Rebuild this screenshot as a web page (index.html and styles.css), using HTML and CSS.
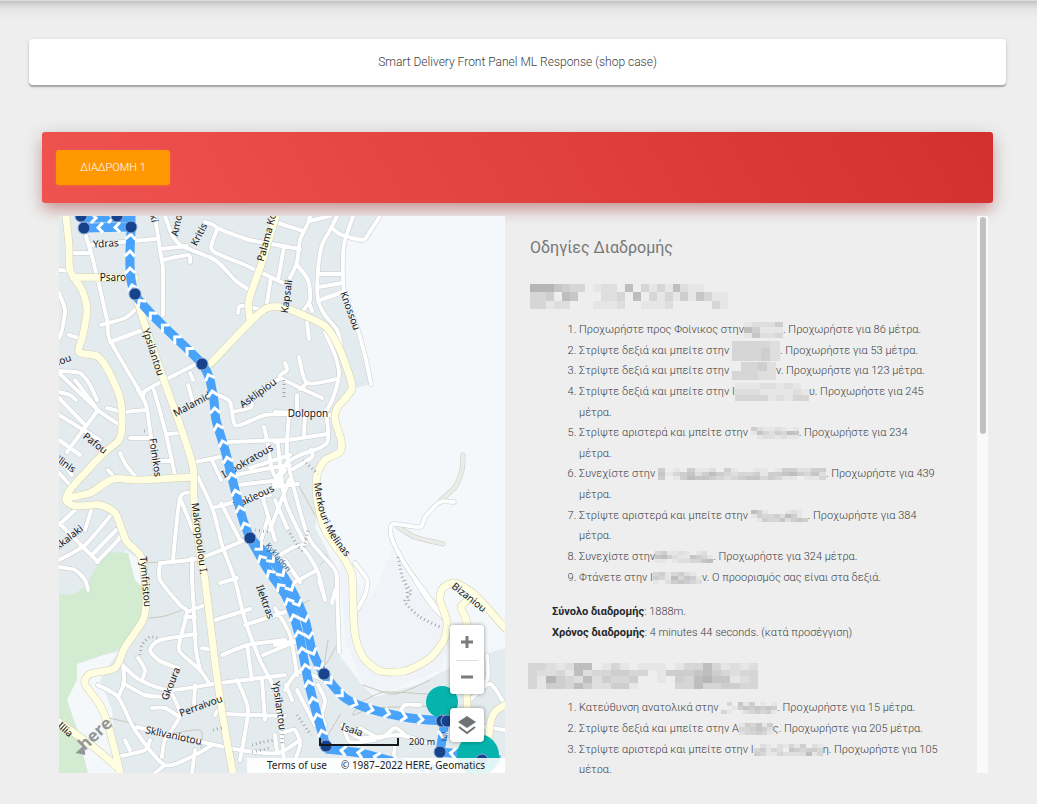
FILE: index.html
```html
<!DOCTYPE html>
<html lang="el">
<head>
<meta charset="utf-8">
<title>Smart Delivery Front Panel</title>
<link rel="stylesheet" href="styles.css">
</head>
<body>
<div class="page">
  <header class="title-card">Smart Delivery Front Panel ML Response (shop case)</header>
  <main>
    <nav class="tabs"><button class="tab" type="button">ΔΙΑΔΡΟΜΗ 1</button></nav>
    <div class="content">
      <section class="map" aria-label="Map">
        <svg class="map-canvas" viewBox="59 216 446 557" preserveAspectRatio="xMidYMid slice">
          <rect class="land" x="0" y="0" width="1000" height="1000"/>
          <path class="sea" d="M380 216L370 237L345 237L343 290L371 384L356 388L345 402L334 412L341 445L318 468L318 515L315 527L337 570L339 655L362 685L375 697L420 684L460 662L505 648V216Z"/>
          <path class="built" d="M339 560L345 640L365 688L380 694L440 670L452 640L436 598L415 590L395 545L370 600Z"/>
          <path class="sea" d="M60 664L118 652L100 680L112 710L117 773H88L60 720ZM125 550L142 560L145 590L135 590Z"/>
          <path class="park" d="M59 594L73 595L86 586L97 566L105 552L128 553L135 580L145 590L142 620L121 649L77 664V680L67 700L76 726L88 773H59Z"/>
          <g id="roads"></g>
          <g class="labels">
            <text transform="translate(106 247) rotate(-3)">Ydras</text>
            <text transform="translate(116 281)">Psaron</text>
            <text transform="translate(150 353) rotate(72)">Ypsilantou</text>
            <text transform="translate(202 236) rotate(-62)">Kritis</text>
            <text transform="translate(180 226) rotate(-78)">Amo</text>
            <text transform="translate(151 219) rotate(80)">ki</text>
            <text transform="translate(270 238) rotate(-75)">Palama Ko</text>
            <text transform="translate(290 297) rotate(-82)">Kapsali</text>
            <text transform="translate(347 312) rotate(70)">Knossou</text>
            <text transform="translate(260 396) rotate(-36)">Asklipiou</text>
            <text transform="translate(196 406) rotate(-28)">Malamida</text>
            <text transform="translate(308 417)">Dolopon</text>
            <text transform="translate(249 464) rotate(-30)">Ippokratous</text>
            <text transform="translate(255 500) rotate(-25)">Irakleous</text>
            <text transform="translate(152 458) rotate(82)">Foinikos</text>
            <text transform="translate(93 446) rotate(38)">Pafou</text>
            <text transform="translate(64 467) rotate(35)">ilinis</text>
            <text transform="translate(65 363) rotate(-20)">iou</text>
            <text transform="translate(196 539) rotate(83)">Makropoulou I.</text>
            <text transform="translate(71 540) rotate(-38)">kkalaki</text>
            <text transform="translate(142 582) rotate(85)">Tymfristou</text>
            <path id="melinas" fill="none" d="M314 483C318 515 324 535 354 566"/>
            <text class="along"><textPath href="#melinas">Merkouri Melinas</textPath></text>
            <text transform="translate(467 600) rotate(38)">Bizaniou</text>
            <text transform="translate(262 603) rotate(70)">Ilektras</text>
            <text transform="translate(276 706) rotate(82)">Ypsilantou</text>
            <text transform="translate(174 685) rotate(-68)">Gkoura</text>
            <text transform="translate(202 709) rotate(-20)">Perraivou</text>
            <text transform="translate(173 739) rotate(12)">Sklivaniotou</text>
            <text transform="translate(63 732) rotate(42)">Illia</text>
            <text transform="translate(351 733) rotate(18)">Isaia</text>
          </g>
          <g id="route"></g>
          <g class="labels">
            <text class="faint" transform="translate(276 559) rotate(50)">Kykladon</text>
            <text class="faint" transform="translate(447 737) rotate(-80)">tal</text>
          </g>
          <g class="stops">
            <circle class="depot" cx="442" cy="702" r="16"/><circle class="depot" cx="478" cy="755" r="21"/>
            <circle cx="81" cy="216" r="6"/><circle cx="117" cy="216" r="6"/><circle cx="84" cy="228" r="6"/><circle cx="131" cy="227" r="6"/><circle cx="135" cy="294" r="6"/><circle cx="202" cy="364" r="6"/><circle cx="250" cy="538" r="6"/><circle cx="324" cy="674" r="6"/><circle cx="326" cy="746" r="6"/><circle cx="442" cy="721" r="6"/><circle cx="447" cy="721" r="6"/><circle cx="440" cy="752" r="6"/><circle cx="482" cy="760" r="6"/>
          </g>
          <g transform="translate(84 752) rotate(-43)"><path class="brand-mark" d="M-7 -5H5L-1 3Z"/><text class="brand" x="1" y="0">here</text></g>
        </svg>
        <div class="copyright"><a href="#terms">Terms of use</a><span>© 1987–2022 HERE, Geomatics</span></div>
        <div class="scale"><span class="scale-bar"></span><span>200 m</span></div>
        <div class="controls">
          <div class="zoom">
            <button type="button" aria-label="Zoom in"><svg viewBox="0 0 34 34"><path d="M17 11V23M11 17H23"/></svg></button>
            <button type="button" aria-label="Zoom out"><svg viewBox="0 0 34 34"><path d="M11 17H23"/></svg></button>
          </div>
          <button class="layers" type="button" aria-label="Layers"><svg viewBox="0 0 34 34"><path class="solid" d="M17 8L26 14L17 20L8 14Z"/><path class="sheet" d="M9 19L17 25L25 19"/></svg></button>
        </div>
      </section>
      <section class="directions">
        <div class="steps">
          <h1>Οδηγίες Διαδρομής</h1>
          <h2><span class="redacted" data-size="198x25" data-rows="1113455.7668285757267788.|5548238886658285757473577.|557668.87776887776.8888578"></span></h2>
          <ol>
            <li>Προχωρήστε προς Φοίνικος στην<span class="redacted" data-size="39x16" data-rows="76664|24777|73665"></span>. Προχωρήστε για 86 μέτρα.</li>
            <li>Στρίψτε δεξιά και μπείτε στην <span class="redacted" data-size="48x20" data-rows="55556|55546|55546"></span>. Προχωρήστε για 53 μέτρα.</li>
            <li>Στρίψτε δεξιά και μπείτε στην <span class="redacted" data-size="44x18" data-rows=".5546|55566"></span>ν. Προχωρήστε για 123 μέτρα.</li>
            <li>Στρίψτε δεξιά και μπείτε στην Ι<span class="redacted" data-size="74x18" data-rows="777667678|666777767|555576755"></span>υ. Προχωρήστε για 245 μέτρα.</li>
            <li>Στρίψτε αριστερά και μπείτε στην <span class="redacted" data-size="48x12" data-rows="46776787|73564523|87667677"></span>. Προχωρήστε για 234 μέτρα.</li>
            <li>Συνεχίστε στην <span class="redacted" data-size="168x12" data-rows="48784776847887787446644|37543642456554744324536|48742334565433545778775"></span>. Προχωρήστε για 439 μέτρα.</li>
            <li>Στρίψτε αριστερά και μπείτε στην <span class="redacted" data-size="57x12" data-rows="2478887678|7455462478|8745536434"></span>. Προχωρήστε για 384 μέτρα.</li>
            <li>Συνεχίστε στην<span class="redacted" data-size="58x12" data-rows="5477678768|3246773457|7787665532"></span>. Προχωρήστε για 324 μέτρα.</li>
            <li>Φτάνετε στην Ι<span class="redacted" data-size="49x12" data-rows="54754678|45725347|78643456"></span>ν. Ο προορισμός σας είναι στα δεξιά.</li>
          </ol>
          <p><b>Σύνολο διαδρομής</b>: 1888m.<br><b>Χρόνος διαδρομής</b>: 4 minutes 44 seconds. (κατά προσέγγιση)</p>
          <h2 class="next"><span class="redacted" data-size="230x26" data-rows="5567622875787778755257676|5665726554455874443245655|5714562645548.78452133765|5744524664478888552554455"></span></h2>
          <ol>
            <li>Κατεύθυνση ανατολικά στην <span class="redacted" data-size="56x12" data-rows="8583748787|8874343434|5788654547"></span>. Προχωρήστε για 15 μέτρα.</li>
            <li>Στρίψτε δεξιά και μπείτε στην Α<span class="redacted" data-size="34x12" data-rows="745374|554346|655457"></span>ς. Προχωρήστε για 205 μέτρα.</li>
            <li>Στρίψτε αριστερά και μπείτε στην Ι<span class="redacted" data-size="69x12" data-rows="867867574867|547568345445|457756666275"></span>η. Προχωρήστε για 105 μέτρα.</li>
          </ol>
        </div>
        <div class="track" role="scrollbar" aria-label="Οδηγίες" aria-valuenow="0"><div class="thumb"></div></div>
      </section>
    </div>
  </main>
</div>
<script src="map.js"></script>
</body>
</html>
```
FILE: styles.css
```css
* { box-sizing: border-box; }
body { margin: 0; background: #fff; color: #3c4043; font-family: Roboto, "Noto Sans", sans-serif; font-size: 11px; font-weight: 300; }
button { font: inherit; border: 0; padding: 0; cursor: pointer; }
.page { margin: 0 2px 3px 0; min-height: calc(100vh - 3px); padding: 39px 31px 31px 29px; background: linear-gradient(#dcdcdc 0 1px, #c2c2c2 1px, #d4d4d4 4px, #e4e4e4 9px, #ededed 18px, #eee 22px); }
.title-card { display: flex; align-items: center; justify-content: center; height: 46px; border-radius: 4px; background: #fff; font-size: 12px; box-shadow: 0 2px 1px rgba(0, 0, 0, .24), 0 1px 4px rgba(0, 0, 0, .14); }
.tabs { margin: 47px 13px 0; padding: 18px 14px; border-radius: 3px; background: linear-gradient(60deg, #ef5350, #d32f2f); box-shadow: 0 4px 20px rgba(0, 0, 0, .16), 0 8px 14px -2px rgba(211, 47, 47, .35); }
.tab { display: block; width: 114px; height: 35px; border-radius: 3px; background: #ff9800; color: #fff; font-size: 11px; box-shadow: 0 1px 3px rgba(255, 152, 0, .4); }
.content { position: relative; display: grid; grid-template-columns: 446fr 471fr; gap: 12px; margin: 13px 18px 0 30px; height: calc(100vh - 250px); }

.map { position: relative; overflow: hidden; min-width: 0; min-height: 0; font-family: "Noto Sans", sans-serif; font-weight: 400; color: #1c1c24; }
.map-canvas { display: block; width: 100%; height: 100%; }
.land { fill: #e3ebee; }
.sea { fill: #f4f8fb; }
.built { fill: #f0f3f7; }
.park { fill: #d3ebd1; }
#roads path, #route path { fill: none; stroke-linecap: round; stroke-linejoin: round; }
#roads .street-edge { stroke: #c8cbcc; stroke-width: 5; }
#roads .street { stroke: #fff; stroke-width: 4; }
#roads .avenue-edge { stroke: #cfcfb6; stroke-width: 8; }
#roads .avenue { stroke: #fffee0; stroke-width: 7; }
#roads .track-edge { stroke: #cacac6; stroke-width: 5; }
#roads .dirt { stroke: #ebebe8; stroke-width: 4; }
#roads .trail { stroke: #c9c8b9; stroke-width: 1; }
#roads .stairs { stroke: #a4a9ac; stroke-width: 3; stroke-dasharray: 1 3; stroke-linecap: butt; }
#route .line { stroke: #4aa3fb; stroke-width: 9; stroke-linecap: butt; }
#route .arrow { stroke: #fff; stroke-width: 3; stroke-linecap: butt; stroke-linejoin: miter; }
.stops circle { fill: #17428c; stroke: #86a9d6; stroke-width: 1; }
.stops .depot { fill: #06b4ad; stroke: none; }
.labels text { font-size: 10px; fill: #14141c; text-anchor: middle; }
.labels .along { text-anchor: start; }
.labels .faint { fill: #285c92; font-size: 8px; }
.brand { font: 700 17px "Open Sans", sans-serif; fill: #94979a; }
.brand-mark { fill: #94979a; }
.copyright { position: absolute; right: 0; bottom: 0; display: flex; gap: 14px; height: 15px; padding: 0 20px; background: rgba(255, 255, 255, .88); font-size: 10px; line-height: 15px; }
.copyright a { color: inherit; text-decoration: none; }
.scale { position: absolute; left: 260px; bottom: 24px; display: flex; align-items: center; gap: 10px; font-size: 9px; line-height: 14px; }
.scale-bar { width: 80px; height: 8px; border: solid #17181b; border-width: 0 2px 2px; }
.controls { position: absolute; right: 21px; bottom: 31px; display: grid; gap: 14px; width: 34px; }
.controls button { display: block; width: 34px; height: 34px; background: #fff; }
.controls svg { display: block; width: 34px; height: 34px; fill: none; stroke: #7b7b7b; stroke-width: 3; }
.zoom, .controls .layers { border-radius: 4px; background: #fff; box-shadow: 0 0 4px rgba(0, 0, 0, .4); overflow: hidden; }
.zoom button + button { margin-top: 1px; background: linear-gradient(#ddd, #ddd) center top / 22px 1px no-repeat #fff; }
.controls .solid { fill: #6f7376; stroke: none; }
.controls .sheet { stroke: #6f7376; stroke-width: 2; }

.directions { display: flex; min-width: 0; min-height: 0; }
.steps { flex: 1; overflow: hidden; padding: 21px 36px 0 13px; line-height: 1.875; }
.steps h1 { margin: 0; color: #777; font-size: 16px; font-weight: 400; line-height: 22px; }
.steps h2 { display: flex; margin: 25px 0 11px; }
.steps h2.next { margin: 20px 0 9px -2px; }
.steps ol { margin: 0; padding-left: 49px; }
.steps p { margin: 14px 0 0 22px; }
.steps b { font-weight: 700; color: #25282b; }
.redacted { display: inline-block; vertical-align: middle; }
li .redacted { margin: -4px 0; }
.redacted svg { display: block; width: 100%; height: 100%; shape-rendering: crispEdges; }
.track { width: 11px; padding: 1px 2px 0 3px; background: #fafafa; }
.thumb { width: 6px; height: 39%; border-radius: 3px; background: #c1c1c1; }
```
FILE: map.js
```js
const SVG = "http://www.w3.org/2000/svg";

function add(parent, name, attributes) {
  const node = document.createElementNS(SVG, name);
  for (const key in attributes) node.setAttribute(key, attributes[key]);
  parent.append(node);
  return node;
}

function points(text) {
  return text.trim().split(/\s+/).map(pair => pair.split(",").map(Number));
}

// Smooth curve through every point of a line.
function curve(text) {
  const p = points(text);
  let d = "M" + p[0];
  for (let i = 0; i < p.length - 1; i++) {
    const a = p[i - 1] || p[i], b = p[i], c = p[i + 1], e = p[i + 2] || c;
    d += "C" + [b[0] + (c[0] - a[0]) / 8, b[1] + (c[1] - a[1]) / 8, c[0] - (e[0] - b[0]) / 8, c[1] - (e[1] - b[1]) / 8, c[0], c[1]];
  }
  return d;
}

const streets = `85,233 93,260 107,320 110,340 143,397|74,253 90,253|90,245 155,239|155,216 160,250 163,270 163,315
165,216 172,235 182,246 215,260 235,280 249,290|160,249 187,246|163,260 188,255 190,262|205,222 217,228 212,250 245,265 283,283
217,228 250,240 290,247|59,270 70,271|101,325 125,318 137,308|110,342 140,331|59,293 65,310 62,330 59,338|69,335 79,338
59,371 80,373 90,385 97,400|143,397 148,389 200,362|238,313 240,306 250,307 265,311|271,277 267,303|59,392 70,395 76,400
310,216 308,223 300,240 297,262 290,278|275,222 303,231|310,221 330,216|337,216 330,230 322,245 318,270 318,300 325,315 337,330 341,345
332,228 342,235 363,240 371,230 380,216|353,216 345,240 343,255 344,290 358,330 366,360 371,384|319,274 343,274|319,287 342,283|320,300 343,292
297,265 308,280 310,300 302,312|309,302 312,311|307,322 309,339|275,245 300,249|284,247 278,280|325,332 335,355 339,375 333,398 327,410
285,363 287,370 281,378 322,398|299,357 307,383 337,379|307,383 300,389|281,378 268,385|59,398 85,425|59,373 98,410 120,425
98,410 67,452|75,380 98,410|107,408 122,412|125,412 145,410|59,415 100,440|59,440 80,455|59,458 72,475|59,473 70,485
138,390 146,405 150,430 155,470|154,390 165,430 175,475|130,438 150,438|167,434 180,433|155,461 170,461|120,453 126,465 135,476|108,470 115,478
188,385 193,402|195,462 220,457|212,460 221,480|228,442 285,440|218,395 230,402 235,425 250,421 265,415 290,414|232,412 250,408 252,403|190,373 193,380
264,427 268,445 272,470 280,485|235,475 270,468 290,465|238,485 280,480|250,468 290,455|213,508 245,499 270,495
198,477 213,510 222,545 235,580 245,620 260,660 275,690 280,720 285,770|192,493 180,498 173,560|180,498 193,530|160,563 200,558 245,540
192,558 192,580|160,563 160,580 180,605 187,612 180,640 180,652 200,670 210,685|221,503 240,540|220,583 237,578|270,490 285,470
59,525 75,510|59,560 85,545 110,516|97,562 118,540 122,532|91,511 85,530|59,523 98,562|92,555 116,530|59,567 75,570 85,580 88,590
268,518 258,550|262,495 275,540|289,480 270,530|275,412 330,415|289,415 287,455 297,500 310,540 335,570 337,590 339,652
326,410 327,443 300,455 287,463 275,480|275,442 327,434|305,415 304,435|297,395 297,412|311,450 312,457 293,469|275,487 298,484
278,445 285,500 303,540|275,500 288,530|280,555 300,546 317,570 325,600|295,582 317,570|300,546 306,543|285,560 300,582
454,502 440,502 425,517 420,527 393,524 391,535 397,550 410,572 425,592 447,623|355,563 367,580 365,595 357,610|415,580 430,603 446,620
319,580 325,600|335,590 332,603|275,608 290,635 297,675|275,645 300,640|285,690 298,672 325,680|245,625 285,612|263,655 300,640|297,690 315,725|286,685 292,700
192,580 194,615 196,650 200,670|187,612 205,605|185,617 195,617|215,620 250,609|202,648 213,650|222,655 248,645 285,640
196,634 160,640 150,650 160,661 178,668|122,665 140,680 170,690 220,683 285,675|123,665 124,683 118,697|98,685 118,697 135,730 165,765 195,755 212,745
123,683 145,695 165,697|170,690 180,715 165,740 162,757|152,708 165,708 178,716|195,685 194,705|138,658 145,670 142,680|247,645 252,680
237,680 248,710 240,760|262,680 265,720|215,715 218,711 228,714 285,716|137,727 170,735 240,750 278,753 300,740|117,757 145,750 150,740|125,740 130,750|192,773 195,750|155,773 165,765
275,735 277,752|285,732 295,730 300,745 293,765|318,685 325,700 322,715 325,725|342,725 360,738 400,735 430,744|360,728 380,738 395,728 405,735|395,745 393,765|400,712 405,705 420,705|487,655 487,680 470,690|470,700 490,684 505,705|484,727 505,730|343,724 350,742 375,740`.replace(/\n/g, "|").split("|");

const avenues = [
  "66,216 69,245 70,270 82,290 87,310 83,335 79,352 97,356 108,370 120,398 122,425 119,440 105,452 85,473 70,490 66,500 75,506 100,505 115,513 122,530 127,542 140,555 144,572 146,600 143,620 125,647 115,668 90,674 85,684 100,705 108,725 116,755 120,773",
  "73,277 135,278", "67,498 90,493 113,479 140,480 193,477", "59,722 95,748 118,768",
  "135,294 145,325 162,375 180,425 193,467 194,500 201,560 205,580 216,670 225,730 233,773",
  "276,216 262,262 249,300 250,320",
  "202,368 212,362 250,322 267,308 285,308 325,326 340,350 352,385 348,395 337,408 335,420 341,440 340,452 325,460 317,475 317,500 325,530 345,560 352,575 353,600 355,635 363,657 380,671 405,671 430,658 444,640 447,622 440,600 443,588 455,583 475,595 505,628",
  "475,595 461,607 467,625 467,700 469,773", "505,705 495,712 490,725 488,750"
];
const dirt = ["463,455 462,470 455,487 441,500", "398,527 415,537 443,544"];
const trails = ["149,618 165,616 185,609", "109,718 135,724", "145,563 160,562", "166,735 200,730 201,748", "315,515 298,484", "363,685 395,694 430,680", "365,700 385,692 430,694 450,690", "363,700 353,715 375,708 445,706", "328,640 325,665 338,643", "320,565 327,556 315,550", "340,715 325,740", "310,600 285,613"];
const stairs = ["140,655 142,645 150,637 160,639", "252,745 263,742 275,740", "252,752 270,748", "284,380 284,400", "288,530 302,550 308,530", "398,557 403,580 411,592 405,602 420,617 442,628", "255,530 268,532", "303,460 318,474", "405,580 409,602", "282,730 282,745", "297,715 311,735", "213,730 222,728", "144,431 147,431"];

const roads = document.getElementById("roads");
function draw(lines, ...styles) {
  const d = lines.map(curve).join("");
  for (const style of styles) add(roads, "path", { class: style, d });
}
draw(trails, "trail");
draw(dirt, "track-edge", "dirt");
draw(streets, "street-edge", "street");
draw(avenues, "avenue-edge", "avenue");
draw(stairs, "stairs");

// Each leg is listed in the direction of travel.
const legs = [
  "250,538 243,520 235,490 225,450 216,420 213,395 202,364 135,294 131,227", "131,227 84,228", "131,227 131,216", "80,218 131,218",
  "250,538 272,560 290,587 305,620 312,650 324,674 345,698 370,709 410,718 442,721",
  "326,746 317,715 308,680 299,635 287,598 268,570 250,538",
  "500,760 470,755 440,752", "440,770 400,763 360,753 326,749", "445,721 440,752"
];
const route = document.getElementById("route");
const drawn = legs.map(leg => add(route, "path", { class: "line", d: curve(leg) }));
for (const line of drawn) {
  const length = line.getTotalLength();
  for (let at = 15; at < length - 6; at += 17) {
    const p = line.getPointAtLength(at), q = line.getPointAtLength(at + 1);
    const angle = Math.atan2(q.y - p.y, q.x - p.x) * 180 / Math.PI;
    add(route, "path", { class: "arrow", d: "M-4 -5L1 0L-4 5", transform: `translate(${p.x} ${p.y}) rotate(${angle})` });
  }
}

// Masks private street names with grey tiles.
for (const mask of document.querySelectorAll(".redacted")) {
  const [width, height] = mask.dataset.size.split("x");
  const rows = mask.dataset.rows.split("|");
  mask.style.width = width + "px";
  mask.style.height = height + "px";
  const svg = add(mask, "svg", { viewBox: `0 0 ${rows[0].length} ${rows.length}`, preserveAspectRatio: "none" });
  rows.forEach((row, y) => [...row].forEach((level, x) => {
    if (level === ".") return;
    const grey = 174 + Number(level) * 8;
    add(svg, "rect", { x, y, width: 1, height: 1, fill: `rgb(${grey},${grey},${grey})` });
  }));
}
```
